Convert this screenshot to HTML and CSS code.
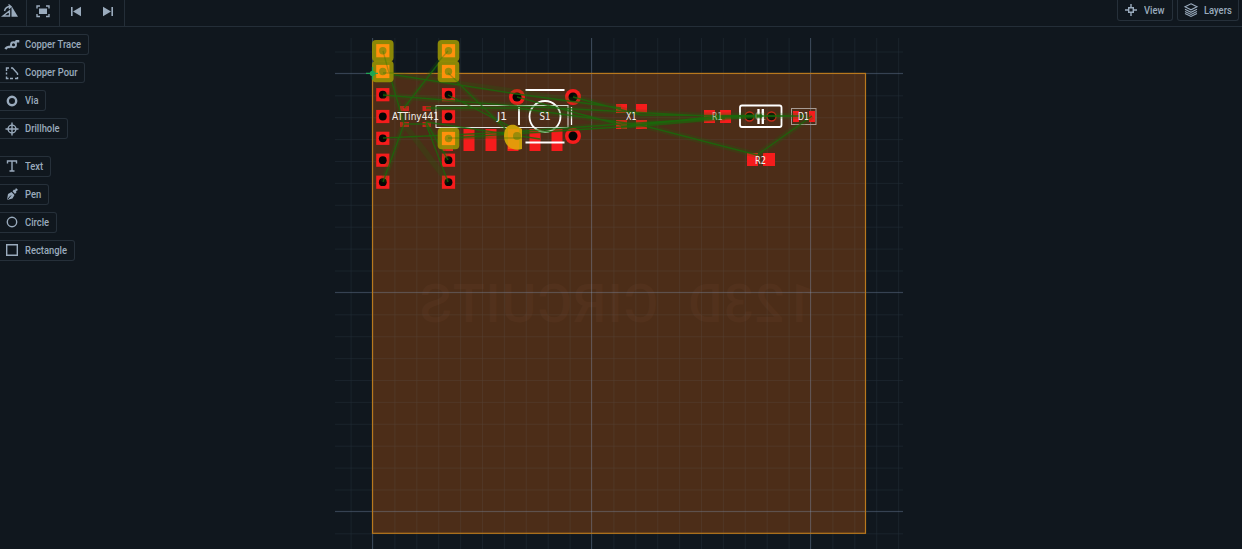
FILE: index.html
```
<!DOCTYPE html>
<html lang="en">
<head>
<meta charset="utf-8">
<title>PCB editor</title>
<link rel="stylesheet" href="styles.css">
</head>
<body>
<div class="app">
  <header class="topbar">
    <div class="group group-flip"><svg class="icon wide" viewBox="0 0 16 14"><path d="M0 12h6.500V7zM1.500 7q1-4.500 6-4.500M5.500.5L8 2.500l-2 2.300" class="line"/><path d="M8.500 2v10.700H15z" class="solid"/></svg></div>
    <div class="group group-fit"><svg class="icon" viewBox="0 0 14 14"><path d="M1 4.500V2h3M10 2h3v2.500M13 10v2.500h-3M4 12.500H1V10" class="line"/><path d="M3 4.500h8v5.500H3z" class="solid"/></svg></div>
    <div class="group group-step">
      <svg class="icon" viewBox="0 0 14 14"><path d="M2 3h1.600v9H2zM12 2.700v9.600L4 7.500z" class="solid"/></svg>
      <svg class="icon" viewBox="0 0 14 14"><path d="M10.400 3H12v9h-1.600zM2 2.700v9.600l8-4.800z" class="solid"/></svg>
    </div>
    <div class="actions">
      <button class="btn view"><svg class="icon" viewBox="0 0 14 14"><path d="M4.700 4.700h4.600v4.600H4.700zM7 1v3.500M7 9.500V13M1 7h3.500M9.500 7H13" class="line"/></svg><span class="label">View</span></button>
      <button class="btn layers"><svg class="icon" viewBox="0 0 14 14"><path d="M7 .8l6 3-6 3-6-3zM1 6.300l6 3 6-3M1 8.400l6 3 6-3M1 10.400l6 3 6-3" class="line thin"/></svg><span class="label">Layers</span></button>
    </div>
  </header>
  <main class="work">
    <nav class="tools">
      <button class="btn tool trace"><svg class="icon" viewBox="0 0 14 14"><path d="M.3 11q1.700-2.500 4-2l2-.8M10 5.500l1.500-2.300h2.800" class="line thick"/><circle cx="8.500" cy="6.800" r="2.500" class="line heavy"/></svg><span class="label">Copper Trace</span></button>
      <button class="btn tool pour"><svg class="icon" viewBox="0 0 14 14"><path d="M1.500 5V2H4M6 2h1.500l5 5.500V9M12.500 11v1.500H10M8 12.500H5M3.500 12.500h-2v-2M1.500 8.500v-2" class="line"/></svg><span class="label">Copper Pour</span></button>
      <button class="btn tool via"><svg class="icon" viewBox="0 0 14 14"><circle cx="7" cy="7" r="4.200" class="line thick"/></svg><span class="label">Via</span></button>
      <button class="btn tool drill"><svg class="icon" viewBox="0 0 14 14"><circle cx="7" cy="7" r="3.900" class="line"/><path d="M7 .5v13M.5 7h13" class="line"/></svg><span class="label">Drillhole</span></button>
      <button class="btn tool text"><svg class="icon" viewBox="0 0 14 14"><path d="M2.500 4.500V2h9v2.500M7 2v10M4.500 12h5" class="line"/></svg><span class="label">Text</span></button>
      <button class="btn tool pen"><svg class="icon" viewBox="0 0 14 14"><path d="M2 13l1-6 3.500-2L9.500 8l-2 3.500zM7.500 4.200L9 2.600l1 .4 1-2L13 3l-2 1.300.5 1L10 7z" class="solid"/><path d="M2.500 12.500l3.500-4" class="cut"/></svg><span class="label">Pen</span></button>
      <button class="btn tool circle"><svg class="icon" viewBox="0 0 14 14"><circle cx="7" cy="7" r="4.700" class="line"/></svg><span class="label">Circle</span></button>
      <button class="btn tool rectangle"><svg class="icon" viewBox="0 0 14 14"><path d="M1.700 1.700h10.600v10.600H1.700z" class="line"/></svg><span class="label">Rectangle</span></button>
    </nav>
    <svg class="board" viewBox="335 27 568 522">
      <defs>
        <pattern id="minor" x="372.500" y="73.400" width="21.900" height="21.900" patternUnits="userSpaceOnUse"><path d="M0 0H21.900M0 0V21.900" class="minor"/></pattern>
        <g id="pad"><rect x="-6.600" y="-6.600" width="13.200" height="13.200" class="copper"/><circle r="3.900" class="hole"/></g>
        <g id="round"><circle r="8" class="copper"/><circle r="4.500" class="hole"/></g>
        <g id="hot"><rect x="-10.800" y="-10.800" width="21.600" height="21.600" rx="4" class="halo"/><rect x="-6.600" y="-6.600" width="13.200" height="13.200" class="hotpad"/><circle r="3.700" class="hothole"/></g>
      </defs>
      <rect x="372.500" y="73.400" width="493" height="459.900" class="substrate"/>
      <g transform="translate(816 322) scale(-1 1)"><text class="watermark" textLength="396" lengthAdjust="spacing" xml:space="preserve">123D  CIRCUITS</text></g>
      <rect x="335" y="38" width="568" height="511" fill="url(#minor)"/>
      <path d="M335 73.400h38M866 73.400h37M335 292.400h568M335 511.400h568M372.500 38v35M372.500 534v15M591.500 38v511M810.500 38v511" class="major"/>
      <rect x="372.500" y="73.400" width="493" height="459.900" class="edge"/>

      <g class="copper">
        <path d="M400 106h9v5h-9zM422.500 106h8.500v5h-8.500zM400 122h9v5h-9zM422.500 122h8.500v5h-8.500z" opacity=".75"/>
        <path d="M442 129h11v22h-11zM463.500 129h11v22h-11zM485.500 129h11v22h-11zM507.500 129h11v22h-11zM529.500 129h11v22h-11zM551.500 129h11v22h-11z"/>
        <path d="M616 104h11v9h-11zM636 104h11v9h-11zM616 120h11v9h-11zM636 120h11v9h-11z"/>
        <path d="M704 110h11v13h-11zM720 110h11v13h-11zM747 153h11v13h-11zM763 153h12v13h-12zM793 111h6v11h-6zM809 111h6v11h-6z"/>
      </g>
      <rect x="436" y="105.500" width="132" height="22" class="silk"/>
      <use href="#pad" x="382.800" y="94.700"/><use href="#pad" x="382.800" y="116.500"/><use href="#pad" x="382.800" y="138.300"/><use href="#pad" x="382.800" y="160.200"/><use href="#pad" x="382.800" y="182.200"/>
      <use href="#pad" x="448.500" y="94.700"/><use href="#pad" x="448.500" y="116.500"/><use href="#pad" x="448.500" y="160.200"/><use href="#pad" x="448.500" y="182.200"/>
      <use href="#round" x="517" y="97"/><use href="#round" x="573" y="97"/><use href="#round" x="573" y="136"/>
      <circle cx="749.500" cy="116.500" r="4.500" class="smallhole"/><circle cx="771.500" cy="116.500" r="4.500" class="smallhole"/>
      <g class="silk bold">
        <path d="M525.500 90h39M525.500 142.500h39M519 107v18"/>
        <path d="M571.500 107v18" stroke-width="1.300"/>
        <circle cx="545" cy="116.500" r="15.500"/>
        <rect x="740" y="105.500" width="41.500" height="21.500" rx="2"/>
        <path d="M758.500 109v15M762.800 109v15" stroke-width="2.300"/>
      </g>
      <rect x="791.500" y="108.500" width="24.500" height="16" class="silk dim"/>

      <g class="nets">
        <path class="glow" d="M383 51L404 124L383 182M383 73L517 92L621 108M383 95L517 106L725 117M448 51L404 108M448 73L513 136M448 138L621 124L725 118M404 124L448 182M426 108H517L641 125L757 155L812 116M426 122L448 160M573 97L641 115L805 116"/>
        <path class="wire" d="M383 51L404 124L383 182M383 73L517 94L621 108M383 95L517 106L725 117M448 51L404 108M448 73L513 136M448 95L513 128M383 138L513 132L621 124L725 118M404 124L426 124L448 182M426 122L448 160M426 108L517 108L641 125L757 155M426 122L540 139M448 138L621 127L710 117L805 116M757 155L812 116M517 97L621 125M573 97L641 115L805 116"/>
        <path class="wide-wire" d="M621 127L718 118L762 116"/>
      </g>
      <use href="#hot" x="382.800" y="50.700"/><use href="#hot" x="448.500" y="50.700"/><use href="#hot" x="382.800" y="71.500"/><use href="#hot" x="448.500" y="71.500"/><use href="#hot" x="448.500" y="138.500"/>
      <path d="M504 136c0-8 4-12 11-11l7 4v20c-9 3-18-3-18-13z" class="blob"/><path d="M508 129h11v20h-11z" class="hotpad" opacity=".5"/><circle cx="517" cy="136" r="4" class="hothole"/>
      <path class="wire faint" d="M383 51L389 73M383 73H394M448 51L439 61M448 73L459 83M448 138H522"/>
      <g class="labels">
        <text x="392" y="120.300" textLength="47" lengthAdjust="spacingAndGlyphs">ATTiny441</text>
        <text x="497" y="120.300" textLength="10" lengthAdjust="spacingAndGlyphs">J1</text><text x="539.500" y="120.300" textLength="11" lengthAdjust="spacingAndGlyphs">S1</text><text x="626" y="120.300" textLength="10.500" lengthAdjust="spacingAndGlyphs">X1</text>
        <text x="712" y="120.300" textLength="10.500" lengthAdjust="spacingAndGlyphs" opacity=".6">R1</text><text x="755" y="120.300" textLength="11" lengthAdjust="spacingAndGlyphs" opacity=".4">C1</text><text x="798" y="120.300" textLength="11" lengthAdjust="spacingAndGlyphs">D1</text><text x="755" y="163.500" textLength="11" lengthAdjust="spacingAndGlyphs">R2</text>
      </g>
      <path d="M366 73.400h12M372.500 67v12.500" class="origin"/><circle cx="372.500" cy="73.400" r="2.700" class="origin-dot"/>
    </svg>
  </main>
</div>
</body>
</html>
```

FILE: styles.css
```
* { box-sizing: border-box; }
body { margin: 0; background: #10171e; color: #9aabbd; font: 500 10px Roboto, sans-serif; overflow: hidden; }
.app { display: flex; flex-direction: column; width: 1242px; height: 549px; }
.topbar { display: flex; height: 27px; border-bottom: 1px solid #242e38; }
.group { display: flex; align-items: center; height: 26px; padding-bottom: 5px; border-right: 1px solid #242e38; }
.group-flip { width: 27px; padding-left: 3px; }
.group-fit { width: 33px; justify-content: center; }
.group-step { width: 65px; padding-left: 9px; gap: 18px; }
.actions { display: flex; gap: 4px; margin-left: auto; padding-right: 3px; }
.icon { width: 14px; height: 14px; flex: none; overflow: visible; }
.icon.wide { width: 16px; }
.line { fill: none; stroke: #9aabbd; stroke-width: 1.4; }
.thin { stroke-width: 1.1; }
.heavy { stroke-width: 1.9; }
.thick { stroke-width: 2.4; }
.solid { fill: #9aabbd; }
.cut { stroke: #10171e; stroke-width: 1; }
.btn { display: flex; align-items: center; gap: 6px; height: 22px; padding: 0 0 0 6px; border: 1px solid #26303a; border-radius: 3px; background: #10171e; color: inherit; font: inherit; white-space: nowrap; }
.label { display: block; transform: scaleX(.94); transform-origin: left center; }
.actions .btn { height: 21px; border-top: 0; border-radius: 0 0 3px 3px; }
.view { width: 56px; }
.layers { width: 62px; }
.work { display: flex; flex: 1; min-height: 0; }
.tools { display: flex; flex-direction: column; align-items: flex-start; width: 335px; padding-top: 7px; gap: 7px; }
.tool { height: 21px; padding: 0 0 0 5px; border-left: 0; border-radius: 0 3px 3px 0; }
.trace { width: 89px; }
.pour { width: 85px; }
.via { width: 46px; }
.drill { width: 67.500px; margin-bottom: 9.500px; }
.text { width: 51px; }
.pen { width: 49px; }
.circle { width: 57px; }
.rectangle { width: 75px; }
.board { display: block; width: 568px; height: 522px; }
.substrate { fill: #4c2d18; }
.edge { fill: none; stroke: #b9781d; stroke-width: 1.2; }
.minor { fill: none; stroke: #809cb8; stroke-opacity: .16; stroke-width: 1; }
.major { fill: none; stroke: #88a0c0; stroke-opacity: .32; stroke-width: 1; }
.watermark { fill: #56351f; font: 500 53px Roboto, sans-serif; opacity: .6; }
.copper { fill: #f51c1c; }
.hole { fill: #070606; }
.smallhole { fill: #101008; stroke: #c52a18; stroke-width: 1.4; }
.silk { fill: none; stroke: #e8e8e8; stroke-width: 1; }
.bold { stroke: #fff; stroke-width: 1.8; }
.dim { stroke: #a69b94; }
.labels { fill: #f4f0eb; font: 10px "DejaVu Sans", sans-serif; }
.glow { fill: none; stroke: #1b6b0b; stroke-opacity: .2; stroke-width: 6; }
.wire { fill: none; stroke: #176b0a; stroke-opacity: .8; stroke-width: 1.3; }
.faint { stroke-opacity: .3; }
.wide-wire { fill: none; stroke: #176b0a; stroke-opacity: .6; stroke-width: 4; }
.halo { fill: #949004; fill-opacity: .93; }
.hotpad { fill: #ff910c; }
.hothole { fill: #9a8b0a; }
.blob { fill: #c9a008; }
.origin { stroke: #1fa653; stroke-width: 1.3; }
.origin-dot { fill: #1fa653; }
```
